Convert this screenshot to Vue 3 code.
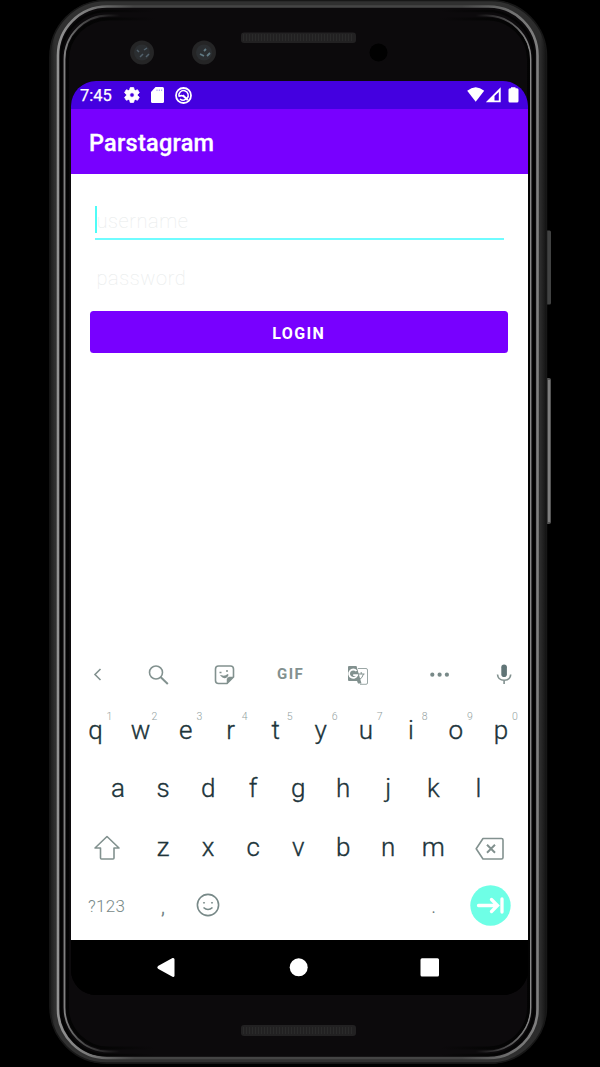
<script setup>
const topRow = 'qwertyuiop'.split('').map((k, i) => ({ k, n: (i + 1) % 10 }))
const midRow = 'asdfghjkl'.split('')
const lowRow = 'zxcvbnm'.split('')
</script>

<template>
  <div class="stage">
    <svg class="frame" width="600" height="1067" viewBox="0 0 600 1067" fill="none">
      <defs>
        <linearGradient id="outer" x1="49" x2="548" y1="0" y2="0" gradientUnits="userSpaceOnUse">
          <stop offset="0" stop-color="#151515" /><stop offset=".012" stop-color="#303030" />
          <stop offset=".1" stop-color="#303030" /><stop offset=".9" stop-color="#303030" />
          <stop offset=".985" stop-color="#2b2b2b" /><stop offset="1" stop-color="#0c0c0c" />
        </linearGradient>
        <linearGradient id="shine" x1="57" x2="539" y1="0" y2="0" gradientUnits="userSpaceOnUse">
          <stop offset="0" stop-color="#929292" /><stop offset=".06" stop-color="#7c7c7c" />
          <stop offset=".16" stop-color="#454545" /><stop offset=".84" stop-color="#454545" />
          <stop offset=".94" stop-color="#707070" /><stop offset="1" stop-color="#808080" />
        </linearGradient>
        <linearGradient id="inner" x1="64" x2="532" y1="0" y2="0" gradientUnits="userSpaceOnUse">
          <stop offset="0" stop-color="#838383" /><stop offset=".03" stop-color="#555" />
          <stop offset=".12" stop-color="#0c0a0c" /><stop offset=".88" stop-color="#0c0a0c" />
          <stop offset=".97" stop-color="#666" /><stop offset="1" stop-color="#8c8c8c" />
        </linearGradient>
        <linearGradient id="gap" x1="60" x2="535" y1="0" y2="0" gradientUnits="userSpaceOnUse">
          <stop offset="0" stop-color="#030303" /><stop offset=".1" stop-color="#050505" />
          <stop offset=".2" stop-color="#0c0a0c" /><stop offset=".8" stop-color="#0c0a0c" />
          <stop offset=".9" stop-color="#050505" /><stop offset="1" stop-color="#030303" />
        </linearGradient>
      </defs>
      <rect x="545" y="230.500" width="6" height="74" rx="1.500" fill="#414242" />
      <rect x="545" y="378" width="6" height="146" rx="2" fill="#555" />
      <path d="M549 380V522" stroke="#8b8b8b" stroke-width="1.500" />
      <rect x="49.500" y="0" width="497.500" height="1063.500" rx="57" fill="url(#outer)" />
      <rect x="50" y=".5" width="496.500" height="1062.500" rx="56" stroke="#171717" stroke-width="1.500" />
      <rect x="58" y="6.500" width="479.500" height="1051.500" rx="49" fill="#0c0a0c" stroke="url(#shine)" stroke-width="2.600" />
      <rect x="61.200" y="11" width="472.500" height="1044" rx="46" stroke="url(#gap)" stroke-width="2.500" />
      <rect x="64.500" y="15.500" width="466" height="1036" rx="44" stroke="url(#inner)" stroke-width="1.800" />
      <rect x="67.500" y="19" width="461" height="1029" rx="41" stroke="url(#gap)" stroke-width="3" />
      <rect x="241" y="32.500" width="115" height="10.500" rx="3" fill="#222122" />
      <rect x="241" y="1025" width="115" height="11" rx="3" fill="#222122" />
      <path d="M243 37.500H354M243 1030.500H354" stroke="#2a2a2a" stroke-width="7" stroke-dasharray="1 2" />
      <circle cx="142" cy="52.500" r="12" fill="#252526" />
      <circle cx="142" cy="52.500" r="8" fill="#2b2e31" />
      <path d="M137 50l2 2M140 57l3-3M144 50l3-2M146 57l3-3" stroke="#52616c" stroke-width="1.500" />
      <circle cx="204" cy="52.500" r="12" fill="#252526" />
      <circle cx="204" cy="52.500" r="8" fill="#2b2e31" />
      <path d="M200 54l4 2M204 51l2-2M207 56l3-3" stroke="#617a84" stroke-width="1.800" />
      <circle cx="378.500" cy="52.500" r="9" fill="#010101" />
    </svg>

    <main class="screen">
      <header class="status">
        <span class="time">7:45</span>
        <svg class="gear" width="18" height="18" viewBox="0 0 24 24"><path fill="#fff" stroke="#fff" stroke-width="1" fill-rule="evenodd" d="M19.400 13a7.500 7.500 0 0 0 0-2l2.100-1.700c.2-.1.200-.4.100-.6l-2-3.500c-.1-.2-.4-.3-.6-.2l-2.500 1a7.300 7.300 0 0 0-1.700-1L14.400 2.400c0-.2-.2-.4-.5-.4h-4c-.2 0-.4.2-.5.400L9 5a8 8 0 0 0-1.700 1l-2.500-1c-.2-.1-.5 0-.6.200l-2 3.500c-.1.200-.1.500.1.600L4.500 11a8 8 0 0 0 0 2l-2.200 1.700c-.2.100-.2.400-.1.600l2 3.500c.1.200.4.300.6.200l2.500-1c.5.400 1.100.7 1.700 1l.4 2.600c0 .2.200.4.500.400h4c.2 0 .4-.2.500-.4l.4-2.600c.6-.3 1.200-.6 1.700-1l2.500 1c.2.100.5 0 .6-.2l2-3.500c.1-.2.100-.5-.1-.6zM12 15a3 3 0 1 1 0-6 3 3 0 0 1 0 6z" /></svg>
        <svg class="card" width="13" height="16" viewBox="0 0 13 16"><path fill="#fff" d="M4.500 0H11.500Q13 0 13 1.500V14.500Q13 16 11.500 16H1.500Q0 16 0 14.500V5z" /><path d="M6 2.500v1.500M8.300 2.500v1.500M10.600 2.500v1.500" stroke="#8d7bf2" stroke-width=".8" /></svg>
        <svg class="ring" width="17" height="17" viewBox="0 0 17 17" fill="none" stroke="#fff"><circle cx="8.500" cy="8.500" r="7.500" stroke-width="1.800" /><path d="M4 9.500a4.700 4.700 0 1 1 8 2M4 9.500q3-2 5.200.5T12.500 13M5 12q3 2.500 5.500.3M8 8l5 5" stroke-width="1.500" /></svg>
        <span class="grow" />
        <svg width="54" height="17" viewBox="0 0 54 17" fill="#fff">
          <path d="M.2 3.800Q8.700-3.200 17.200 3.800L8.700 14.700z" />
          <path fill-rule="evenodd" d="M33.700 .3V15.200H18.800zM31.800 5L27.500 9V13.500H31.800z" />
          <path d="M44 1.300V.3h4.500v1H50q1.500 0 1.500 1.500V14q0 1.500-1.500 1.500H43q-1.500 0-1.500-1.500V2.800Q41.500 1.300 43 1.300z" />
        </svg>
      </header>

      <div class="appbar">Parstagram</div>

      <section class="form">
        <div class="field focused"><i class="caret" /><span>username</span></div>
        <div class="field"><span>password</span></div>
        <button class="login">LOGIN</button>
      </section>

      <section class="keyboard">
        <div class="tools">
          <svg width="456" height="28" viewBox="71 660 456 28" fill="none" stroke="#82918f" stroke-width="1.600">
            <path d="M100.500 669L95 674.500l5.500 5.500" />
            <circle cx="156" cy="672.500" r="6.500" /><path d="M160.800 677.300l7 6.700" stroke-width="2" />
            <path d="M218.500 666h12q3 0 3 3v8l-6.500 6.500h-8.500q-3 0-3-3v-11.500q0-3 3-3z" />
            <path d="M233 677h-3.500q-2.500 0-2.500 2.500v4z" fill="#82918f" stroke-width=".5" />
            <path d="M219.500 672.500h2M226 671h2M221.500 676q4 1 6.500-1.500-1 3-3.500 3-2 0-3-1.500z" stroke-width="1.300" />
            <path d="M349 666h7.500l5 17.500H358l-1-2.500h-8q-1 0-1-1v-13q0-1 1-1z" fill="#82918f" stroke="none" />
            <path d="M358 668.500h8q1.500 0 1.500 1.500v13q0 1.300-1.500 1.300h-6" stroke-width=".8" />
            <path d="M356.500 671a4.200 4.200 0 1 0 .7 4.200h-4" stroke="#fff" stroke-width="1.800" />
            <path d="M358 674h6.500M361.200 672v2M363.500 674q-1 4-4.500 6" stroke-width="1" />
            <g fill="#788988" stroke="none"><circle cx="432.300" cy="674.700" r="2.100" /><circle cx="439.600" cy="674.700" r="2.100" /><circle cx="446.900" cy="674.700" r="2.100" /></g>
            <rect x="501.300" y="664.500" width="5.600" height="12.500" rx="2.800" fill="#617577" stroke="none" />
            <path d="M497.500 674.500q.5 5.700 6.600 5.700t6.600-5.700M504.100 680v4" />
          </svg>
          <span class="gif">GIF</span>
        </div>
        <div class="row top">
          <div v-for="c in topRow" :key="c.k" class="key">{{ c.k }}<sup>{{ c.n }}</sup></div>
        </div>
        <div class="row mid">
          <div v-for="k in midRow" :key="k" class="key">{{ k }}</div>
        </div>
        <div class="row low">
          <svg class="shift" width="28" height="26" viewBox="0 0 28 26" fill="none" stroke="#82918f" stroke-width="1.600"><path d="M14 1.500L26 13h-5v10q0 1-1 1H8.500q-1 0-1-1V13H2z" stroke-linejoin="round" /></svg>
          <div v-for="k in lowRow" :key="k" class="key">{{ k }}</div>
          <svg class="erase" width="30" height="24" viewBox="0 0 30 24" fill="none" stroke="#82918f" stroke-width="1.600"><path d="M8 1.500H26.500q1.500 0 1.500 1.500V20.500q0 1.500-1.500 1.500H8L1.200 11.800z" stroke-linejoin="round" /><path d="M12 7.800l8 8M20 7.800l-8 8" stroke-width="2" /></svg>
        </div>
        <div class="row last">
          <span class="sym">?123</span>
          <span class="punct comma">,</span>
          <svg class="smile" width="24" height="24" viewBox="0 0 24 24" fill="none" stroke="#788988" stroke-width="1.600"><circle cx="12" cy="12" r="10.600" /><path d="M7.500 14.500q4.500 4 9 0" /><circle cx="8" cy="9.800" r=".5" fill="#788988" stroke-width="1" /><circle cx="16" cy="9.800" r=".5" fill="#788988" stroke-width="1" /></svg>
          <span class="grow" />
          <span class="punct dot">.</span>
          <svg class="next" width="41" height="41" viewBox="0 0 41 41" fill="none"><circle cx="20.500" cy="20.500" r="20.200" fill="#6effe6" /><path d="M8.500 20.500H27M21.500 14.500l6 6-6 6M32 14V27" stroke="#fff" stroke-width="3.300" stroke-linecap="round" /></svg>
        </div>
      </section>

      <nav class="nav">
        <svg width="456" height="55" viewBox="71 939.5 456 55" fill="#fff">
          <path d="M158 965.500L172.500 957.500Q174.500 957 174.500 959V975Q174.500 977 172.500 976.200L158 968.200Q156.500 967 158 965.500z" />
          <circle cx="298.700" cy="966.800" r="9" />
          <rect x="420.500" y="957.700" width="18.500" height="18.300" rx="1.500" />
        </svg>
      </nav>
    </main>
  </div>
</template>

<style>
html, body { background: #000; }
</style>

<style scoped>
.stage {
  position: relative;
  box-sizing: border-box;
  width: 600px;
  height: 1067px;
  padding: 81px 72.500px 72px 71px;
  background: #000;
  overflow: hidden;
  font-family: Roboto, "Liberation Sans", sans-serif;
}
.frame { position: absolute; left: 0; top: 0; }
.screen {
  position: relative;
  display: flex;
  flex-direction: column;
  width: 456.500px;
  height: 914px;
  border-radius: 25px;
  overflow: hidden;
  background: #000;
}
.grow { flex: 1; }
.status {
  display: flex;
  align-items: center;
  flex: 0 0 27.500px;
  height: 27.500px;
  box-sizing: border-box;
  padding: 1px 7px 0 9px;
  background: #4400e0;
  color: #fff;
}
.time { width: 43px; font-size: 16.500px; -webkit-text-stroke: .25px #fff; }
.gear { margin-right: 10px; }
.card { margin-right: 11px; }
.appbar {
  flex: 0 0 65px;
  height: 65px;
  box-sizing: border-box;
  padding: 3px 0 0 18px;
  background: #7800ff;
  color: #fff;
  font-size: 23.500px;
  font-weight: 500;
  line-height: 62.500px;
  letter-spacing: .25px;
  -webkit-text-stroke: .3px #fff;
}
.form {
  display: flex;
  flex-direction: column;
  flex: 1;
  padding: 24.500px 19.500px 0 18.500px;
  background: #fff;
}
.field {
  position: relative;
  box-sizing: border-box;
  height: 42.500px;
  margin: 0 4px 0 5px;
  padding-left: 2px;
  font-size: 20px;
  font-weight: 100;
  line-height: 46px;
  letter-spacing: .6px;
  color: #e8ebeb;
}
.field + .field { margin-top: 14.500px; }
.focused { height: 42px; margin-bottom: .5px; border-bottom: 2px solid #6ffcff; }
.caret {
  position: absolute;
  left: 0;
  top: 8px;
  width: 2.500px;
  height: 27px;
  background: #4ffcf7;
}
.login {
  height: 41.500px;
  margin: 13.500px 0 0;
  padding: 3.500px 0 0;
  border: 0;
  border-radius: 3.500px;
  background: #7800ff;
  color: #fff;
  font: 700 16px Roboto, sans-serif;
  letter-spacing: 1.400px;
}
.keyboard { flex: 0 0 285px; height: 285px; background: #fff; }
.tools { position: relative; height: 46px; padding-top: 5px; box-sizing: border-box; }
.tools svg { display: block; }
.gif {
  position: absolute;
  left: 206px;
  top: 10.500px;
  color: #82918f;
  font-size: 15px;
  font-weight: 700;
  line-height: 18px;
  letter-spacing: 1.500px;
}
.row { display: flex; height: 58.600px; }
.key {
  position: relative;
  width: 45.050px;
  text-align: center;
  color: #20343a;
  font-size: 26px;
  font-weight: 300;
  -webkit-text-stroke: .35px #20343a;
  line-height: 58px;
}
.key sup {
  position: absolute;
  left: 33.500px;
  top: 10px;
  color: #939f9f;
  font-size: 10.500px;
  font-weight: 300;
  line-height: 12px;
  -webkit-text-stroke: 0;
}
.top { padding-left: 2px; }
.mid { padding-left: 24.500px; }
.low { padding-left: 22px; }
.shift { margin: 17.500px 19.500px 0 0; }
.erase { margin: 19px 0 0 19.500px; }
.last { height: 58px; align-items: flex-start; }
.sym { width: 73px; margin-left: 17px; color: #788988; font-size: 17px; line-height: 60px; font-weight: 300; letter-spacing: .3px; }
.punct { color: #667779; font-size: 20px; font-weight: 300; line-height: 61px; }
.comma { width: 35px; line-height: 63px; -webkit-text-stroke: .3px #667779; }
.smile { margin-top: 17px; }
.dot { margin-right: 34px; }
.next { margin: 9px 16.500px 0 0; }
.nav { flex: 0 0 55.500px; height: 55.500px; background: #000; }
.nav svg { display: block; }
</style>
